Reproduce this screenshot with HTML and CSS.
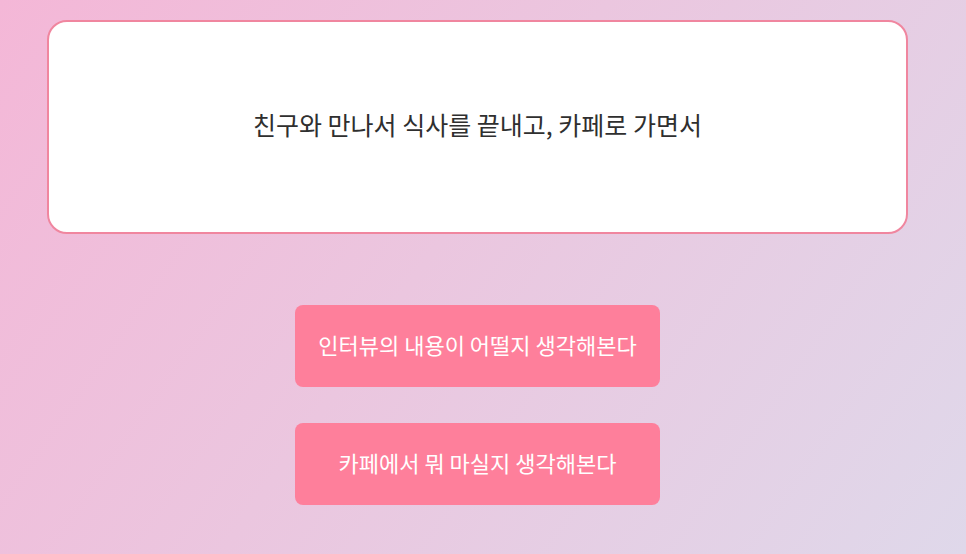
FILE: index.html
```html
<html>

<head>
    <meta charset="utf-8">
    <link rel="stylesheet" href="styles.css">
</head>

<body>
    <div class="stage">
        <div class="scene">
            <p class="sceneText">친구와 만나서 식사를 끝내고, 카페로 가면서</p>
        </div>
        <div class="choices">
            <button class="choice">인터뷰의 내용이 어떨지 생각해본다</button>
            <button class="choice">카페에서 뭐 마실지 생각해본다</button>
        </div>
    </div>
</body>

</html>
```

FILE: styles.css
```css
html,
body {
    margin: 0;
    height: 100%;
}

body {
    background: linear-gradient(125deg, #f4b7d7 0%, #ebc6df 45%, #dfd8ea 100%);
    font-family: "Noto Sans CJK KR", "Noto Sans", sans-serif;
}

.stage {
    padding: 20px 58px 0 47px;
}

.scene {
    height: 210px;
    background: #ffffff;
    border: 2px solid #f0869f;
    border-radius: 20px;
    display: flex;
    align-items: center;
    justify-content: center;
}

.sceneText {
    margin: 0 0 6px;
    font-size: 25px;
    color: #2f2f2f;
}

.choices {
    margin-top: 71px;
    display: flex;
    flex-direction: column;
    align-items: center;
    gap: 36px;
}

.choice {
    width: 365px;
    height: 82px;
    border: none;
    border-radius: 8px;
    background: #fe7f9b;
    color: #ffffff;
    font-family: inherit;
    font-size: 22px;
    padding: 0 0 4px;
}
```
